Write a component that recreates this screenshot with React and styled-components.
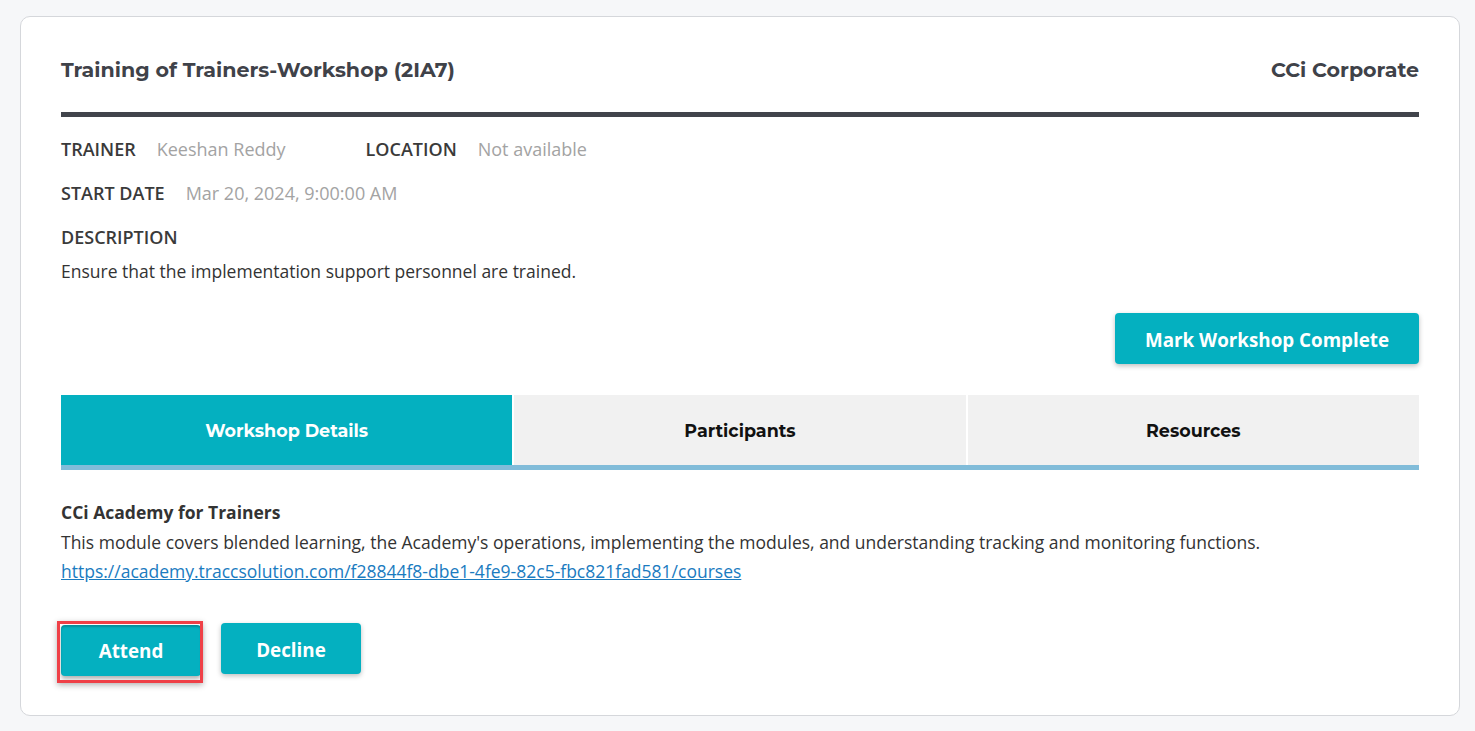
import React from 'react';
import styled, {createGlobalStyle} from 'styled-components';

const GlobalStyle = createGlobalStyle`
    body {
        margin: 0;
        background: #f6f7f9;
        font-family: "Open Sans", sans-serif;
    }
`

const App = () => {
    return(
        <>
        <GlobalStyle />
        <Page>
            <Card>
                <Header>
                    <Title>Training of Trainers-Workshop (2IA7)</Title>
                    <Title>CCi Corporate</Title>
                </Header>
                <Rule />
                <MetaRow>
                    <Meta>
                        <Label>TRAINER</Label>
                        <Value>Keeshan Reddy</Value>
                    </Meta>
                    <Meta>
                        <Label>LOCATION</Label>
                        <Value>Not available</Value>
                    </Meta>
                </MetaRow>
                <MetaRow>
                    <Meta>
                        <Label>START DATE</Label>
                        <Value>Mar 20, 2024, 9:00:00 AM</Value>
                    </Meta>
                </MetaRow>
                <Description>
                    <Label>DESCRIPTION</Label>
                    <p>Ensure that the implementation support personnel are trained.</p>
                </Description>
                <Actions>
                    <Button wide>Mark Workshop Complete</Button>
                </Actions>
                <Tabs>
                    <Tab active>Workshop Details</Tab>
                    <Tab>Participants</Tab>
                    <Tab>Resources</Tab>
                </Tabs>
                <Module>
                    <h4>CCi Academy for Trainers</h4>
                    <p>This module covers blended learning, the Academy's operations, implementing the modules, and understanding tracking and monitoring functions.</p>
                    <a href="#">https://academy.traccsolution.com/f28844f8-dbe1-4fe9-82c5-fbc821fad581/courses</a>
                </Module>
                <Responses>
                    <Button focused>Attend</Button>
                    <Button>Decline</Button>
                </Responses>
            </Card>
        </Page>
        </>
    )
};

const Page = styled.div`
    padding: 16px 15px 16px 20px;
`

const Card = styled.div`
    background: #fff;
    border: 1px solid #d5d7db;
    border-radius: 10px;
    padding: 40px 40px 39px 40px;
    color: #333;
`

const Header = styled.div`
    display: flex;
    justify-content: space-between;
    align-items: center;
`

const Title = styled.h2`
    margin: 0;
    font-family: "Montserrat", "Inter", sans-serif;
    font-size: 20.6px;
    font-weight: 700;
    color: #3f4249;
    line-height: 26px;
`

const Rule = styled.div`
    height: 5px;
    background: #41444b;
    margin: 29px 0 20px;
`

const MetaRow = styled.div`
    display: flex;
    gap: 80px;
    margin-bottom: 20px;
`

const Meta = styled.div`
    display: flex;
    gap: 21px;
    align-items: baseline;
`

const Label = styled.span`
    font-size: 18px;
    font-weight: 600;
    color: #3a3a3a;
    line-height: 24px;
`

const Value = styled.span`
    font-size: 18px;
    color: #a3a3a3;
    line-height: 24px;
`

const Description = styled.div`
    p {
        margin: 10px 0 0;
        font-size: 17.5px;
        line-height: 24px;
        color: #333;
    }
`

const Actions = styled.div`
    display: flex;
    justify-content: flex-end;
    margin: 30px 0 31px;
`

const Button = styled.button`
    position: relative;
    border: none;
    border-radius: 4px;
    background: #04b0c0;
    color: #fff;
    font-family: "Open Sans", sans-serif;
    font-size: 18.8px;
    font-weight: 700;
    height: 51px;
    padding: 3px 0 0;
    width: ${props => props.wide ? "304px" : "140px"};
    box-shadow: 0 2px 5px rgba(0,0,0,0.25);
    cursor: pointer;
    ${props => props.focused && `
        margin-top: 2px;
        padding-top: 1px;
        box-shadow: inset 0 2px 2px rgba(0,0,0,0.2), 0 3px 4px rgba(0,0,0,0.3);
        &::after {
            content: "";
            position: absolute;
            top: -4px;
            left: -4px;
            right: -2px;
            bottom: -7px;
            border: 3px solid #ef4047;
            box-shadow: 0 2px 6px rgba(0,0,0,0.3);
        }
    `}
`

const Tabs = styled.div`
    display: flex;
    gap: 2px;
    border-bottom: 5px solid #81bcd9;
`

const Tab = styled.div`
    flex: 1;
    height: 70px;
    display: flex;
    align-items: center;
    justify-content: center;
    font-family: "Montserrat", "Inter", sans-serif;
    font-size: 17.5px;
    font-weight: 700;
    background: ${props => props.active ? "#04b0c0" : "#f1f1f1"};
    color: ${props => props.active ? "#fff" : "#111"};
`

const Module = styled.div`
    margin-top: 28px;
    font-size: 17.5px;
    line-height: 29.5px;

    h4 {
        margin: 0;
        font-weight: 700;
        font-size: 17.5px;
        color: #333;
    }
    p {
        margin: 0;
        color: #333;
    }
    a {
        color: #1a7bbf;
    }
`

const Responses = styled.div`
    display: flex;
    gap: 20px;
    align-items: flex-start;
    margin-top: 36px;
`

export default App;
